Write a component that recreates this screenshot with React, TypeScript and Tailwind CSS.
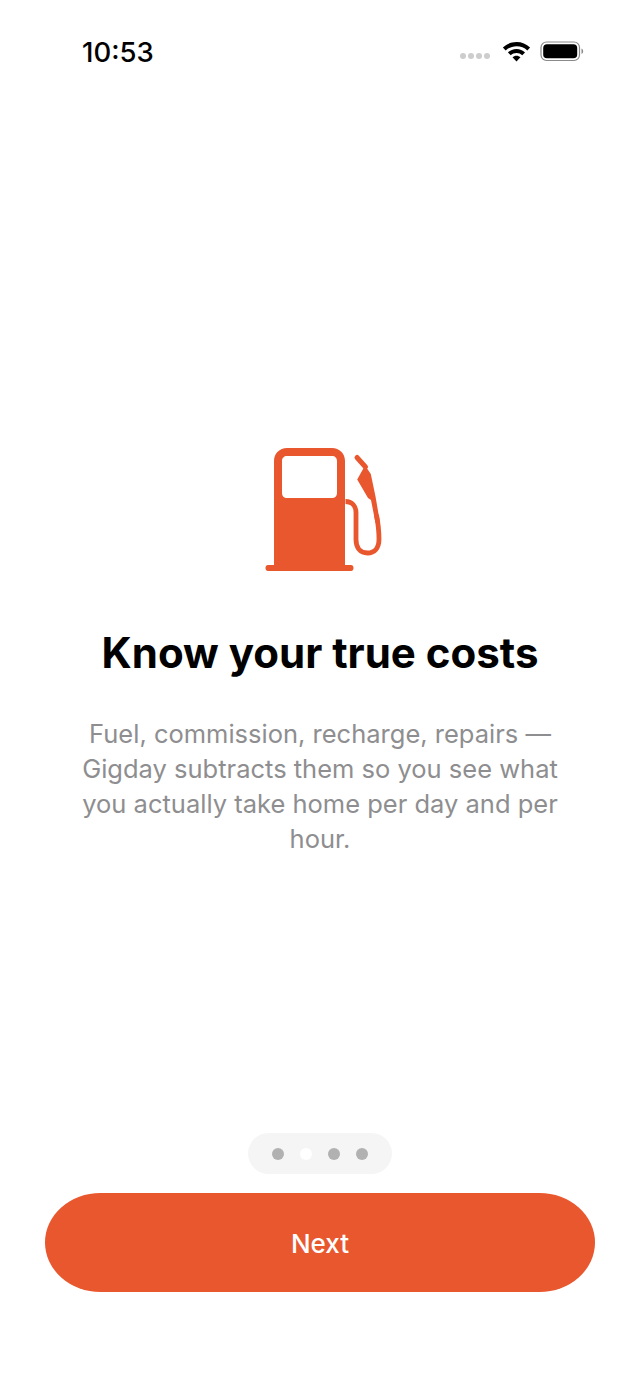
const font = "font-['Inter',sans-serif]";

function Wifi() {
  return (
    <svg width="31" height="24" viewBox="0 0 28 21.700" aria-hidden="true">
      <path d="M14 2.800c4.700 0 9 1.800 12.300 4.900l-2.500 2.600A14.200 14.200 0 0 0 14 6.500c-3.800 0-7.200 1.400-9.800 3.800L1.700 7.700C5 4.600 9.300 2.800 14 2.800z" fill="#000" />
      <path d="M14 9c3 0 5.700 1.100 7.700 3.100l-2.500 2.500A7.400 7.400 0 0 0 14 12.600c-2 0-3.800.8-5.200 2l-2.500-2.500c2-2 4.700-3.100 7.700-3.100z" fill="#000" />
      <path d="M14 15.200c1.400 0 2.700.5 3.600 1.400L14 20.300l-3.600-3.700c.9-.9 2.200-1.400 3.600-1.400z" fill="#000" />
    </svg>
  );
}

function Battery() {
  return (
    <svg width="44" height="22" viewBox="0 0 44 22" aria-hidden="true">
      <rect x="1" y="2" width="38.500" height="18.500" rx="5.500" fill="none" stroke="#8a8a8a" strokeWidth="1.200" />
      <rect x="3.200" y="4.200" width="34" height="14" rx="3.800" fill="#000" />
      <path d="M41.500 8.500c1.100.4 1.600 1.300 1.600 2.700s-.5 2.300-1.600 2.700z" fill="#8a8a8a" />
    </svg>
  );
}

function Pump() {
  return (
    <svg width="130" height="140" viewBox="255 440 130 140" aria-hidden="true">
      <path
        fillRule="evenodd"
        fill="#E9572E"
        d="M287 448h45c7.500 0 13 5.500 13 13v104h6c1.500 0 2.500 1.300 2.500 3s-1 3-2.500 3h-83c-1.500 0-2.500-1.300-2.500-3s1-3 2.500-3h6V461c0-7.500 5.500-13 13-13zM287 456c-3 0-5 2-5 5v32c0 3 2 5 5 5h45c3 0 5-2 5-5v-32c0-3-2-5-5-5z"
      />
      <path
        d="M345.500 501.500c6.500 0 10.500 4.500 10.500 11v27c0 8.500 4.500 13.500 11.500 13.500s11.500-5 11.500-14c0-8-1-16-2.500-24"
        fill="none"
        stroke="#E9572E"
        strokeWidth="4.800"
      />
      <path d="M357 457.500l8.500 9.500" fill="none" stroke="#E9572E" strokeWidth="5" strokeLinecap="round" />
      <path d="M365 465.500l5.800 8.500 4.700 22.500 4.500 26-4.500.5-4.500-23-3-2-10.800-18.500z" fill="#E9572E" />
    </svg>
  );
}

export default function App() {
  return (
    <div className={`${font} flex h-[1391px] w-[640px] flex-col bg-white text-black`}>
      <div className="flex h-[104px] shrink-0 items-start justify-between pl-[82px] pr-[56px] pt-[36px]">
        <span className="text-[27.500px] font-[550] leading-[32px]">10:53</span>
        <div className="flex items-center pt-[3px]">
          <div className="mr-[11px] mt-[10px] flex gap-[2px]">
            <span className="h-[6px] w-[6px] rounded-full bg-[#cdcdcd]" />
            <span className="h-[6px] w-[6px] rounded-full bg-[#cdcdcd]" />
            <span className="h-[6px] w-[6px] rounded-full bg-[#cdcdcd]" />
            <span className="h-[6px] w-[6px] rounded-full bg-[#cdcdcd]" />
          </div>
          <Wifi />
          <div className="ml-[8px]">
            <Battery />
          </div>
        </div>
      </div>

      <div className="flex flex-col items-center pt-[336px]">
        <Pump />
        <h1 className="mt-[48px] text-[42px] font-bold leading-[50px]">Know your true costs</h1>
        <p className="mt-[38px] w-[500px] text-center text-[25.500px] font-normal leading-[35px] text-[#8e8e90]">
          Fuel, commission, recharge, repairs — Gigday subtracts them so you see what you actually take home per day and per hour.
        </p>
      </div>

      <div className="mt-auto flex flex-col items-center pb-[99px]">
        <div className="flex h-[41px] w-[144px] items-center justify-center gap-[16px] rounded-full bg-[#f5f5f5]">
          <span className="h-[12px] w-[12px] rounded-full bg-[#b1b1b1]" />
          <span className="h-[12px] w-[12px] rounded-full bg-white" />
          <span className="h-[12px] w-[12px] rounded-full bg-[#b1b1b1]" />
          <span className="h-[12px] w-[12px] rounded-full bg-[#b1b1b1]" />
        </div>
        <button className="mt-[19px] flex h-[99px] w-[550px] items-center justify-center rounded-[56px/50px] bg-[#E9572E] pt-[1px] text-[26px] font-[550] text-white">
          Next
        </button>
      </div>
    </div>
  );
}
